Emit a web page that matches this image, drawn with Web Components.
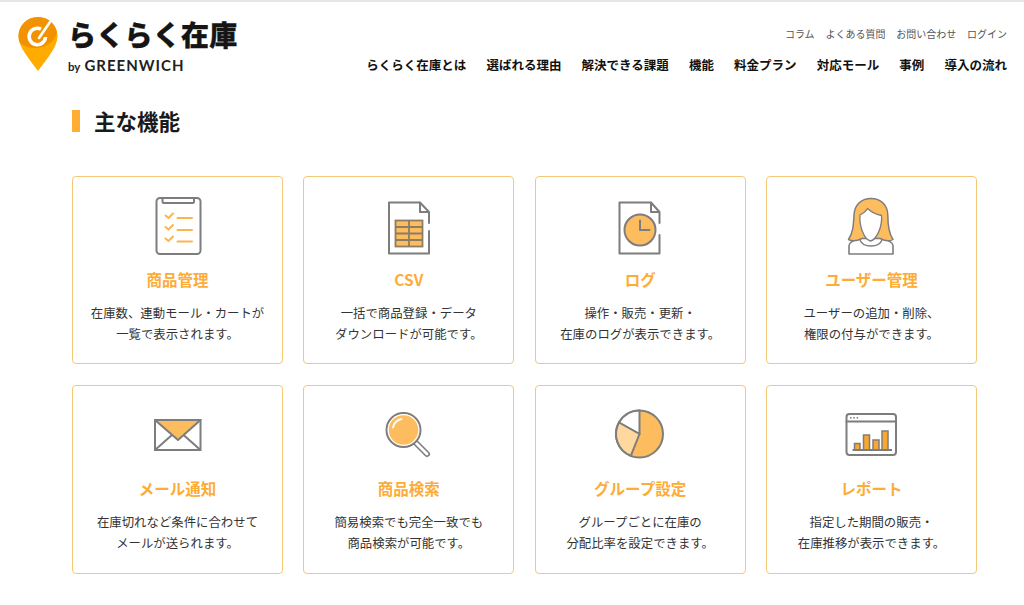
<!DOCTYPE html>
<html lang="ja">
<head>
<meta charset="utf-8">
<title>らくらく在庫 主な機能</title>
<style>
  html, body { margin: 0; background: #fff; }
  body { font-family: "Noto Sans CJK JP", "Noto Sans", sans-serif; color: #333; }
  svg { display: block; }
  .g { fill: none; stroke: #7d7d7d; stroke-width: 2; stroke-linejoin: round; stroke-linecap: round; }
  .o { fill: none; stroke: #fdb54a; stroke-width: 2; stroke-linecap: round; stroke-linejoin: round; }
</style>
</head>
<body>
<site-header></site-header>
<main-section heading="主な機能">
  <feature-grid>
    <feature-card title-text="商品管理">
      <svg slot="icon" width="64" height="64" viewBox="0 0 64 64">
        <rect class="g" x="10.5" y="4" width="44" height="56" rx="3.5"/>
        <path class="g" d="M16.5 4v3.5a1.5 1.5 0 0 0 1.5 1.5h28.5a1.5 1.5 0 0 0 1.5-1.5V4"/>
        <path class="o" d="M19.5 21.5l3 2.5 4.5-4.5M19.5 33l3 2.5 4.5-4.5M19.5 44.5l3 2.5 4.5-4.5"/>
        <path class="o" d="M31.5 24h14.5M31.5 36h14.5M31.5 47.5h14.5"/>
      </svg>
      在庫数、連動モール・カートが<br>一覧で表示されます。
    </feature-card>
    <feature-card title-text="CSV">
      <svg slot="icon" width="64" height="64" viewBox="0 0 64 64">
        <path class="g" d="M52 37V59.5H12V8.5H43M52 29V18L43 8.5V18H52"/>
        <rect x="18.5" y="26.5" width="27" height="26" fill="#fdbd5f" stroke="#8c7d64" stroke-width="1.8"/>
        <path d="M18.5 33h27M18.5 39.5h27M18.5 46h27M32 26.5v26" stroke="#8c7d64" stroke-width="1.8" fill="none"/>
      </svg>
      一括で商品登録・データ<br>ダウンロードが可能です。
    </feature-card>
    <feature-card title-text="ログ">
      <svg slot="icon" width="64" height="64" viewBox="0 0 64 64">
        <path class="g" d="M51.5 41V59.5H11.5V8.5H43M51.5 29V18L43 8.5V18H51.5"/>
        <circle cx="32" cy="36" r="15.5" fill="#fdbd5f" stroke="#7d7d7d" stroke-width="2"/>
        <path class="g" d="M32 26.5V36H41.5"/>
      </svg>
      操作・販売・更新・<br>在庫のログが表示できます。
    </feature-card>
    <feature-card title-text="ユーザー管理">
      <svg slot="icon" width="64" height="64" viewBox="0 0 64 64">
        <path d="M10 60V51.5C10 48 15 46 21 44H43C49 46 54 48 54 51.5V60Z" fill="#fff" stroke="#7d7d7d" stroke-width="1.6" stroke-linejoin="round"/>
        <path d="M21 46C24 54 40 54 43 46" fill="none" stroke="#7d7d7d" stroke-width="1.4"/>
        <path d="M32 4.5C22 4.5 15.5 11 15 21C14.5 31 14 39 9.5 45.5C13 47.5 18 47 23 44.5H41C46 47 51 47.5 54 45.5C49.5 39 48.8 30 48.8 21C48.5 11 42 4.5 32 4.5Z" fill="#fdbd5f" stroke="#7d7d7d" stroke-width="1.5" stroke-linejoin="round"/>
        <path d="M21 21C24 19.5 26.5 18 28.5 14.5C32 18 37.5 20.5 42.5 21.5C43.5 32 38 45.5 31.5 47C25 45.5 20 32 21 21Z" fill="#fff" stroke="#7d7d7d" stroke-width="1.3" stroke-linejoin="round"/>
      </svg>
      ユーザーの追加・削除、<br>権限の付与ができます。
    </feature-card>
    <feature-card title-text="メール通知">
      <svg slot="icon" width="64" height="64" viewBox="0 0 64 64">
        <rect x="9" y="17" width="45.5" height="30" fill="#fff" stroke="#7d7d7d" stroke-width="2"/>
        <path d="M9 47L26.5 31.5M54.5 47L37 31.5" stroke="#7d7d7d" stroke-width="2" fill="none"/>
        <path d="M9 17H54.5L32 37Z" fill="#fdbd5f" stroke="#7d7d7d" stroke-width="2" stroke-linejoin="round"/>
      </svg>
      在庫切れなど条件に合わせて<br>メールが送られます。
    </feature-card>
    <feature-card title-text="商品検索">
      <svg slot="icon" width="64" height="64" viewBox="0 0 64 64">
        <path d="M39 40L50 51" stroke="#7d7d7d" stroke-width="6" stroke-linecap="round"/>
        <path d="M39 40L50 51" stroke="#fff" stroke-width="2.8" stroke-linecap="round"/>
        <circle cx="26.5" cy="27" r="17" fill="#fdbd5f" stroke="#7d7d7d" stroke-width="2"/>
        <circle cx="26.5" cy="27" r="15.3" fill="none" stroke="#fff" stroke-width="1.2"/>
        <path d="M16 24.5C17 19.5 20 17 24.5 16" fill="none" stroke="#fff" stroke-width="1.8" stroke-linecap="round"/>
      </svg>
      簡易検索でも完全一致でも<br>商品検索が可能です。
    </feature-card>
    <feature-card title-text="グループ設定">
      <svg slot="icon" width="64" height="64" viewBox="0 0 64 64">
        <circle cx="31.5" cy="31" r="23.5" fill="#fdbd5f" stroke="#7d7d7d" stroke-width="2"/>
        <path d="M31.5 31V7.5A23.5 23.5 0 0 0 11 19.5Z" fill="#fff" stroke="#7d7d7d" stroke-width="2" stroke-linejoin="round"/>
        <path d="M31.5 31L11 19.5A23.5 23.5 0 0 0 22.8 52.8Z" fill="#fed89e" stroke="#7d7d7d" stroke-width="2" stroke-linejoin="round"/>
      </svg>
      グループごとに在庫の<br>分配比率を設定できます。
    </feature-card>
    <feature-card title-text="レポート">
      <svg slot="icon" width="64" height="64" viewBox="0 0 64 64">
        <rect class="g" x="7.5" y="11" width="49.5" height="41" rx="3"/>
        <path class="g" d="M7.5 18.5H57"/>
        <path d="M11 14.8h1.5M14.3 14.8h1.5M17.6 14.8h1.5" stroke="#7d7d7d" stroke-width="1.5"/>
        <path d="M15.5 47V40.5H21V47ZM24.5 47V32H30.5V47ZM34 47V37H40V47ZM43 47V28H49V47Z" fill="#f9a72f" stroke="#7d7d7d" stroke-width="1.5"/>
        <path d="M13.5 47H53" stroke="#7d7d7d" stroke-width="2"/>
      </svg>
      指定した期間の販売・<br>在庫推移が表示できます。
    </feature-card>
  </feature-grid>
</main-section>

<script>
class SiteLogo extends HTMLElement {
  constructor() {
    super();
    this.attachShadow({ mode: 'open' });
    this.shadowRoot.innerHTML = `
      <style>
        :host { display: flex; align-items: flex-start; gap: 10px; }
        svg { display: block; }
        .words { display: flex; flex-direction: column; }
        .name {
          font: 900 28px/34px "Noto Sans CJK JP", sans-serif;
          color: #151515;
          letter-spacing: .25px;
          -webkit-text-stroke: .3px #151515;
          white-space: nowrap;
        }
        .by {
          font: 700 15px/16px Lato, "Noto Sans", sans-serif;
          color: #222;
          letter-spacing: 1px;
          margin-top: 6px;
          white-space: nowrap;
        }
        .by small { font-size: 11.5px; margin-right: 4px; letter-spacing: 0; }
      </style>
      <svg width="40" height="55" viewBox="0 0 40 55">
        <defs><clipPath id="pin"><path d="M20 0C9 0 .5 8.5 .5 19.5C.5 30 12 43 20 54C28 43 39.5 30 39.5 19.5C39.5 8.5 31 0 20 0Z"/></clipPath></defs>
        <g clip-path="url(#pin)">
          <rect width="40" height="55" fill="#ffab00"/>
          <ellipse cx="17" cy="13" rx="22" ry="18" fill="#f39200"/>
        </g>
        <path d="M23 12.2A8.2 8.2 0 1 0 27.5 20" fill="none" stroke="#fff" stroke-width="3.6"/>
        <path d="M21 21L32 5" stroke="#fff" stroke-width="2.6" stroke-linecap="round"/>
      </svg>
      <div class="words">
        <div class="name">らくらく在庫</div>
        <div class="by"><small>by</small>GREENWICH</div>
      </div>
    `;
  }
}

class SiteHeader extends HTMLElement {
  constructor() {
    super();
    this.attachShadow({ mode: 'open' });
    const sub = ['コラム', 'よくある質問', 'お問い合わせ', 'ログイン'];
    const main = ['らくらく在庫とは', '選ばれる理由', '解決できる課題', '機能', '料金プラン', '対応モール', '事例', '導入の流れ'];
    this.shadowRoot.innerHTML = `
      <style>
        :host {
          display: flex;
          justify-content: space-between;
          border-top: 2px solid #e6e6e6;
          padding: 15px 17px 0 18px;
          height: 73px;
        }
        nav { display: flex; flex-direction: column; align-items: flex-end; }
        .sub { display: flex; gap: 10.8px; font-size: 10px; line-height: 15px; color: #555; margin-top: 9px; }
        .main { display: flex; gap: 20.14px; font-size: 12.5px; line-height: 18px; font-weight: 700; color: #111; margin-top: 15px; }
      </style>
      <site-logo></site-logo>
      <nav>
        <div class="sub">${sub.map((s) => `<span>${s}</span>`).join('')}</div>
        <div class="main">${main.map((s) => `<span>${s}</span>`).join('')}</div>
      </nav>
    `;
  }
}

class MainSection extends HTMLElement {
  constructor() {
    super();
    this.attachShadow({ mode: 'open' });
    this.shadowRoot.innerHTML = `
      <style>
        :host { display: block; padding: 20px 47px 0 72px; }
        h2 {
          margin: 0 0 44px;
          padding-left: 14px;
          border-left: 8px solid #ffad33;
          height: 22px;
          font: 700 21.5px/26px "Noto Sans CJK JP", sans-serif;
          color: #1a1a1a;
          display: flex;
          align-items: center;
        }
      </style>
      <h2></h2>
      <slot></slot>
    `;
    this.shadowRoot.querySelector('h2').textContent = this.getAttribute('heading');
  }
}

class FeatureGrid extends HTMLElement {
  constructor() {
    super();
    this.attachShadow({ mode: 'open' });
    this.shadowRoot.innerHTML = `
      <style>
        :host {
          display: grid;
          grid-template-columns: repeat(4, 211px);
          column-gap: 20.33px;
          row-gap: 20.9px;
        }
      </style>
      <slot></slot>
    `;
  }
}

class FeatureCard extends HTMLElement {
  constructor() {
    super();
    this.attachShadow({ mode: 'open' });
    this.shadowRoot.innerHTML = `
      <style>
        :host {
          display: flex;
          flex-direction: column;
          align-items: center;
          box-sizing: border-box;
          height: 188.4px;
          padding-top: 17px;
          border: 1px solid #f3c877;
          border-radius: 4px;
          background: #fff;
          text-align: center;
        }
        .title {
          margin-top: 10px;
          font-size: 15.5px;
          line-height: 22px;
          font-weight: 700;
          color: #fdac37;
        }
        .text {
          margin-top: 13px;
          font-size: 12.4px;
          line-height: 21px;
          color: #333;
        }
      </style>
      <slot name="icon"></slot>
      <div class="title"></div>
      <div class="text"><slot></slot></div>
    `;
    this.shadowRoot.querySelector('.title').textContent = this.getAttribute('title-text');
  }
}

customElements.define('site-logo', SiteLogo);
customElements.define('site-header', SiteHeader);
customElements.define('main-section', MainSection);
customElements.define('feature-grid', FeatureGrid);
customElements.define('feature-card', FeatureCard);
</script>
</body>
</html>
